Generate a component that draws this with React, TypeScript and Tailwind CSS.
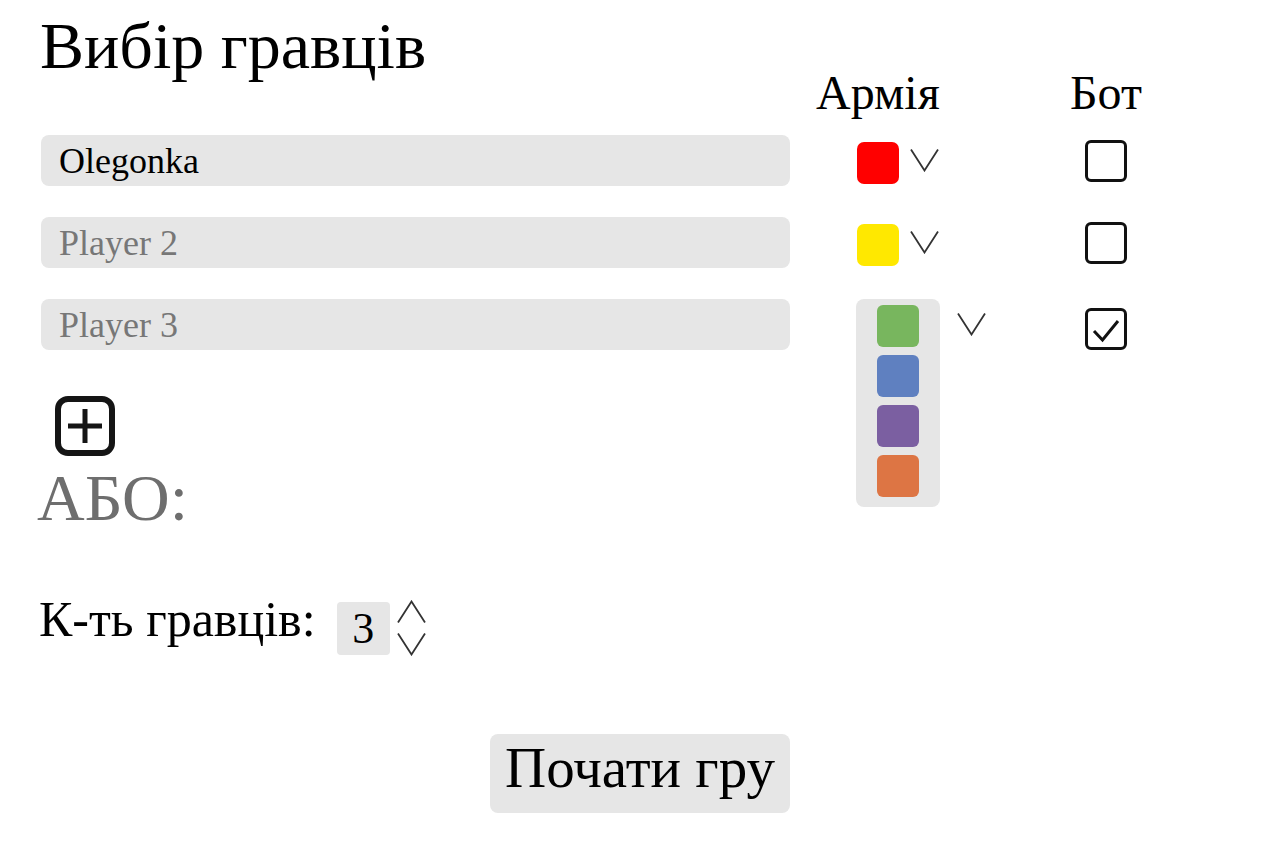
import React, { useState } from 'react';

type Player = {
  name: string;
  color: string;
  bot: boolean;
  open?: boolean;
};

const players: Player[] = [
  { name: 'Olegonka', color: '#ff0000', bot: false },
  { name: '', color: '#ffe800', bot: false },
  { name: '', color: '#78b65e', bot: true, open: true },
];

const paletteColors = ['#78b65e', '#5f80c0', '#7b5fa1', '#dd7544'];

const Chevron: React.FC<{ up?: boolean }> = ({ up = false }) => (
  <svg width="29" height="24" viewBox="0 0 29 24" fill="none">
    <path
      d={up ? 'M1 22.5 L14.5 1.5 L28 22.5' : 'M1 1.5 L14.5 22.5 L28 1.5'}
      stroke="#333"
      strokeWidth="1.8"
    />
  </svg>
);

const Checkbox: React.FC<{ checked: boolean }> = ({ checked }) => (
  <div className="w-[42px] h-[42px] rounded-[6px] border-[3px] border-[#111] bg-white">
    {checked && (
      <svg width="36" height="36" viewBox="0 0 36 36" fill="none">
        <path d="M6 20 L14.5 29 L30 10" stroke="#111" strokeWidth="3" />
      </svg>
    )}
  </div>
);

const PlusBox: React.FC = () => (
  <svg width="60" height="60" viewBox="0 0 60 60" fill="none">
    <rect x="3" y="3" width="54" height="54" rx="10" stroke="#151515" strokeWidth="6" />
    <path d="M13 30 H47 M30 13 V47" stroke="#151515" strokeWidth="5" />
  </svg>
);

const PlayerRow: React.FC<{ player: Player; index: number }> = ({ player, index }) => (
  <div className="flex items-start h-[51px]">
    <input
      className="w-[749px] h-[51px] rounded-lg bg-[#e6e6e6] pl-[18px] text-[36px] text-black placeholder:text-[#777] outline-none [font-family:'Liberation_Serif',serif]"
      defaultValue={player.name}
      placeholder={`Player ${index + 1}`}
    />
    <div className="w-[250px] flex items-start">
      {player.open ? (
        <>
          <div className="relative ml-[66px] w-[84px] h-[51px]">
            {/* open colour dropdown */}
            <div className="absolute left-0 top-0 w-[84px] rounded-lg bg-[#e6e6e6] pt-[6px] pb-[10px] flex flex-col items-center gap-[8px]">
              {paletteColors.map((c) => (
                <div key={c} className="w-[42px] h-[42px] rounded-[6px]" style={{ backgroundColor: c }} />
              ))}
            </div>
          </div>
          <div className="ml-[17px] mt-[13px]">
            <Chevron />
          </div>
        </>
      ) : (
        <>
          <div
            className="ml-[67px] mt-[7px] w-[42px] h-[42px] rounded-[7px]"
            style={{ backgroundColor: player.color }}
          />
          <div className="ml-[11px] mt-[13px]">
            <Chevron />
          </div>
        </>
      )}
    </div>
    <div className={`pl-[45px] ${player.open ? 'mt-[9px]' : 'mt-[5px]'}`}>
      <Checkbox checked={player.bot} />
    </div>
  </div>
);

export default function App() {
  const [count] = useState(3);

  return (
    <div className="w-full min-h-screen bg-white text-black [font-family:'Liberation_Serif',serif]">
      <div className="pl-[41px]">
        <h1 className="-ml-[1px] pt-[21px] text-[66px] leading-[50px] font-normal">Вибір гравців</h1>

        {/* column headers */}
        <div className="mt-[2px] flex text-[48px] leading-[40px]">
          <div className="w-[749px]" />
          <div className="w-[250px] pl-[26px]">Армія</div>
          <div className="pl-[30px]">Бот</div>
        </div>

        <div className="mt-[22px] flex flex-col gap-[31px]">
          {players.map((p, i) => (
            <PlayerRow key={i} player={p} index={i} />
          ))}
        </div>

        <button className="mt-[46px] ml-[14px] block">
          <PlusBox />
        </button>

        <div className="mt-[10px] -ml-[4px] text-[66px] leading-[64px] text-[#6e6e6e]">АБО:</div>

        <div className="mt-[62px] flex items-start">
          <div className="-ml-[2px] text-[50px] leading-[54px]">К-ть гравців:</div>
          <div className="ml-[21px] mt-[10px] w-[53px] h-[53px] rounded-[4px] bg-[#e6e6e6] flex items-center justify-center text-[44px]">
            {count}
          </div>
          <div className="ml-[7px] flex flex-col gap-[8px] mt-[8px]">
            <Chevron up />
            <Chevron />
          </div>
        </div>
      </div>

      <div className="mt-[78px] flex justify-center">
        <button className="rounded-lg bg-[#e6e6e6] px-[15px] pt-[4px] pb-[15px] text-[57px] leading-[60px]">
          Почати гру
        </button>
      </div>
    </div>
  );
}
